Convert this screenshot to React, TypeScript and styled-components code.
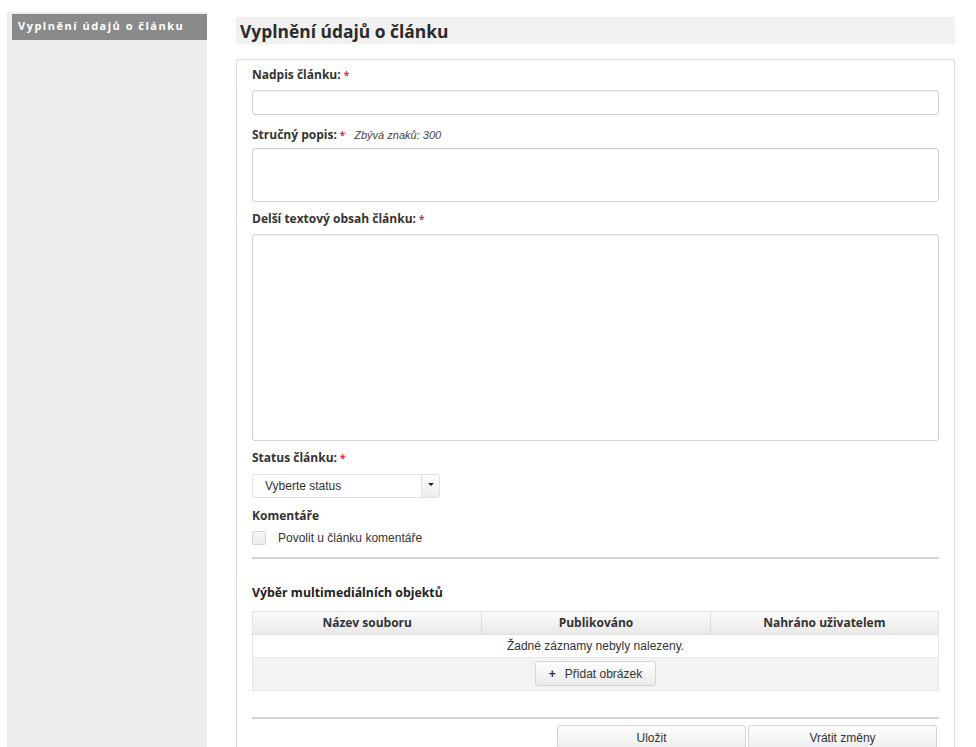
import * as React from "react";
import styled, { createGlobalStyle } from "styled-components";

const GlobalStyle = createGlobalStyle`
  html, body {
    margin: 0;
    padding: 0;
    background: #fff;
  }
  body {
    font-family: "Liberation Sans", Arial, sans-serif;
    font-size: 12px;
    color: #333;
  }
`;

const Page = styled.div`
  display: flex;
  align-items: stretch;
  padding: 12px 0 0 7px;
  min-height: 747px;
  box-sizing: border-box;
`;

const Sidebar = styled.nav`
  width: 200px;
  flex: none;
  background: #eeeeee;
  padding: 2px 0 0 5px;
  box-sizing: border-box;
`;

const SideItem = styled.div`
  height: 26px;
  line-height: 24px;
  padding-left: 6px;
  background: #8a8a8a;
  color: #fff;
  font-family: "Open Sans", sans-serif;
  font-weight: 700;
  font-size: 11px;
  letter-spacing: 1.5px;
  white-space: nowrap;
`;

const Main = styled.main`
  width: 719px;
  margin-left: 29px;
  display: flex;
  flex-direction: column;
`;

const Heading = styled.h1`
  margin: 5px 0 15px;
  height: 27px;
  line-height: 28px;
  padding-left: 4px;
  background: #f1f1f1;
  font-family: "Open Sans", sans-serif;
  font-weight: 700;
  font-size: 17.4px;
  color: #2b2b2b;
`;

const Panel = styled.section`
  flex: 1;
  border: 1px solid #dedede;
  border-bottom: none;
  border-radius: 3px 3px 0 0;
  padding: 7px 15px 0;
  display: flex;
  flex-direction: column;
`;

const Label = styled.div<{ $top: number }>`
  margin-top: ${(p) => p.$top}px;
  height: 16px;
  line-height: 16px;
  font-family: "Open Sans", sans-serif;
  font-weight: 700;
  font-size: 12px;
  color: #333;
  display: flex;
  align-items: baseline;
  white-space: nowrap;
`;

const Req = styled.span`
  color: #d33;
  font-size: 10px;
  margin-left: 3px;
`;

const Hint = styled.span`
  font-family: "Liberation Sans", Arial, sans-serif;
  font-weight: 400;
  font-style: italic;
  font-size: 11px;
  color: #444;
  margin-left: 9px;
`;

const TextBox = styled.div<{ $top: number; $height: number }>`
  margin-top: ${(p) => p.$top}px;
  height: ${(p) => p.$height}px;
  box-sizing: border-box;
  border: 1px solid #d2d2d2;
  border-radius: 3px;
  background: #fff;
  box-shadow: inset 0 1px 1px rgba(0, 0, 0, 0.04);
`;

const Select = styled.div`
  margin-top: 8px;
  width: 188px;
  height: 24px;
  box-sizing: border-box;
  display: flex;
  border: 1px solid #e2e2e2;
  border-radius: 3px;
  background: #fff;
`;

const SelectValue = styled.span`
  flex: 1;
  line-height: 22px;
  padding-left: 12px;
  font-size: 12px;
  color: #333;
`;

const SelectArrow = styled.span`
  width: 18px;
  border-left: 1px solid #e2e2e2;
  background: linear-gradient(#fdfdfd, #ececec);
  display: flex;
  justify-content: center;
  padding-top: 8px;
  box-sizing: border-box;
  &::after {
    content: "";
    border-left: 3px solid transparent;
    border-right: 3px solid transparent;
    border-top: 3px solid #222;
    height: 0;
  }
`;

const CheckRow = styled.label`
  margin-top: 7px;
  display: flex;
  align-items: center;
  height: 14px;
  font-size: 12px;
  color: #333;
`;

const CheckBox = styled.span`
  width: 12px;
  height: 12px;
  border: 1px solid #d6d6d6;
  border-radius: 2px;
  background: linear-gradient(#f7f7f7, #ececec);
  margin-right: 12px;
`;

const Rule = styled.hr<{ $top: number }>`
  margin: ${(p) => p.$top}px 0 0;
  border: none;
  border-top: 2px solid #d3d3d3;
  height: 0;
`;

const SectionTitle = styled.h2`
  margin: 26px 0 0;
  height: 16px;
  line-height: 16px;
  font-family: "Open Sans", sans-serif;
  font-weight: 700;
  font-size: 12.3px;
  color: #222;
`;

const Table = styled.div`
  margin-top: 10px;
  border: 1px solid #e4e4e4;
`;

const HeadRow = styled.div`
  display: grid;
  grid-template-columns: 1fr 1fr 1fr;
  height: 22px;
  background: linear-gradient(#fbfbfb, #e9e9e9);
  border-bottom: 1px solid #e0e0e0;
`;

const HeadCell = styled.div`
  text-align: center;
  line-height: 22px;
  font-family: "Open Sans", sans-serif;
  font-weight: 700;
  font-size: 12px;
  color: #333;
  & + & {
    border-left: 1px solid #dcdcdc;
  }
`;

const EmptyRow = styled.div`
  height: 22px;
  line-height: 22px;
  text-align: center;
  font-size: 12px;
  color: #333;
  background: #fff;
  border-bottom: 1px solid #e8e8e8;
`;

const TableFoot = styled.div`
  height: 32px;
  background: #f3f3f3;
  display: flex;
  justify-content: center;
  align-items: flex-start;
  padding-top: 3px;
  box-sizing: border-box;
`;

const Button = styled.button<{ $width: number }>`
  width: ${(p) => p.$width}px;
  height: 25px;
  border: 1px solid #d4d4d4;
  border-radius: 3px;
  background: linear-gradient(#fdfdfd, #ececec);
  font-family: "Liberation Sans", Arial, sans-serif;
  font-size: 12px;
  color: #333;
  padding: 0;
  cursor: pointer;
`;

const Plus = styled.span`
  font-weight: 700;
  margin-right: 9px;
`;

const Actions = styled.div`
  margin-top: 6px;
  display: flex;
  justify-content: flex-end;
  gap: 2px;
  padding-right: 2px;
`;

const ActionButton = styled(Button)`
  height: 26px;
  border-radius: 3px 3px 0 0;
`;

function Required() {
  return <Req>*</Req>;
}

export default function App() {
  const columns = ["Název souboru", "Publikováno", "Nahráno uživatelem"];

  return (
    <>
      <GlobalStyle />
      <Page>
        <Sidebar>
          <SideItem>Vyplnění údajů o článku</SideItem>
        </Sidebar>
        <Main>
          <Heading>Vyplnění údajů o článku</Heading>
          <Panel>
            <Label $top={0}>
              Nadpis článku:<Required />
            </Label>
            <TextBox $top={7} $height={25} />

            <Label $top={12}>
              Stručný popis:<Required />
              <Hint>Zbývá znaků: 300</Hint>
            </Label>
            <TextBox $top={5} $height={54} />

            <Label $top={9}>
              Delší textový obsah článku:<Required />
            </Label>
            <TextBox $top={7} $height={207} />

            <Label $top={9}>
              Status článku:<Required />
            </Label>
            <Select>
              <SelectValue>Vyberte status</SelectValue>
              <SelectArrow />
            </Select>

            <Label $top={10}>Komentáře</Label>
            <CheckRow>
              <CheckBox />
              Povolit u článku komentáře
            </CheckRow>

            <Rule $top={12} />

            <SectionTitle>Výběr multimediálních objektů</SectionTitle>
            <Table>
              <HeadRow>
                {columns.map((c) => (
                  <HeadCell key={c}>{c}</HeadCell>
                ))}
              </HeadRow>
              <EmptyRow>Žadné záznamy nebyly nalezeny.</EmptyRow>
              <TableFoot>
                <Button $width={121}>
                  <Plus>+</Plus>Přidat obrázek
                </Button>
              </TableFoot>
            </Table>

            <Rule $top={26} />

            <Actions>
              <ActionButton $width={189}>Uložit</ActionButton>
              <ActionButton $width={189}>Vrátit změny</ActionButton>
            </Actions>
          </Panel>
        </Main>
      </Page>
    </>
  );
}
